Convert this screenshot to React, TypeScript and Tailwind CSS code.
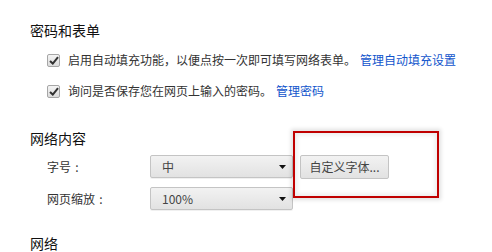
const font = { fontFamily: '"Noto Sans CJK SC", "Liberation Sans", sans-serif' };

const Check = () => (
  <div className="w-[13px] h-[13px] rounded-[2px] border border-[#a6a6a6] bg-gradient-to-b from-[#f4f4f4] to-[#dcdcdc] flex items-center justify-center shrink-0">
    <svg width="10" height="9" viewBox="0 0 10 9">
      <path d="M1 5 L3.8 7.6 L9 1.2" fill="none" stroke="#333" strokeWidth="2" />
    </svg>
  </div>
);

const Select = ({ value }: { value: string }) => (
  <div className="w-[143px] h-[23px] rounded-[2px] border border-[#c4c4c4] bg-gradient-to-b from-[#f2f2f2] to-[#e2e2e2] shadow-[0_1px_0_rgba(0,0,0,0.06)] flex items-center pl-[11px] pr-[6px]">
    <span className="flex-1 text-[12px] text-[#444]">{value}</span>
    <svg width="7" height="4" viewBox="0 0 7 4">
      <path d="M0 0 H7 L3.5 4 Z" fill="#111" />
    </svg>
  </div>
);

const Label = ({ text }: { text: string }) => (
  <span className="w-[103px] flex items-center text-[12px] text-[#333]">
    {text}
    <span className="w-[12px] text-center">:</span>
  </span>
);

export default function App() {
  return (
    <div className="relative w-[492px] h-[252px] bg-white overflow-hidden text-[#303942]" style={font}>
      <div className="pl-[30px] pt-[20px]">
        <h3 className="text-[14px] leading-[20px] text-[#111]">密码和表单</h3>
        <div className="mt-[10px] pl-[17px] flex flex-col gap-[11px]">
          <div className="h-[20px] flex items-center gap-[8px] text-[12px] text-[#333]">
            <Check />
            <span>
              启用自动填充功能，以便点按一次即可填写网络表单。
              <span className="ml-[4px] text-[#15c]">管理自动填充设置</span>
            </span>
          </div>
          <div className="h-[20px] flex items-center gap-[8px] text-[12px] text-[#333]">
            <Check />
            <span>
              询问是否保存您在网页上输入的密码。
              <span className="ml-[4px] text-[#15c]">管理密码</span>
            </span>
          </div>
        </div>

        <h3 className="mt-[27px] text-[14px] leading-[20px] text-[#111]">网络内容</h3>
        <div className="mt-[7px] pl-[17px] flex flex-col gap-[9px]">
          <div className="h-[23px] flex items-center">
            <Label text="字号" />
            <Select value="中" />
            <button className="ml-[7px] w-[89px] h-[24px] rounded-[2px] border border-[#c4c4c4] bg-gradient-to-b from-[#f2f2f2] to-[#e2e2e2] text-[12px] text-[#444]">
              自定义字体...
            </button>
          </div>
          <div className="h-[23px] flex items-center">
            <Label text="网页缩放" />
            <Select value="100%" />
          </div>
        </div>

        <h3 className="mt-[23px] text-[14px] leading-[20px] text-[#111]">网络</h3>
      </div>

      <div className="absolute left-[293px] top-[131px] w-[146px] h-[67px] border-2 border-[#c00000] shadow-[0_0_4px_2px_rgba(0,0,0,0.12),inset_0_0_4px_2px_rgba(0,0,0,0.08)]" />
    </div>
  );
}
